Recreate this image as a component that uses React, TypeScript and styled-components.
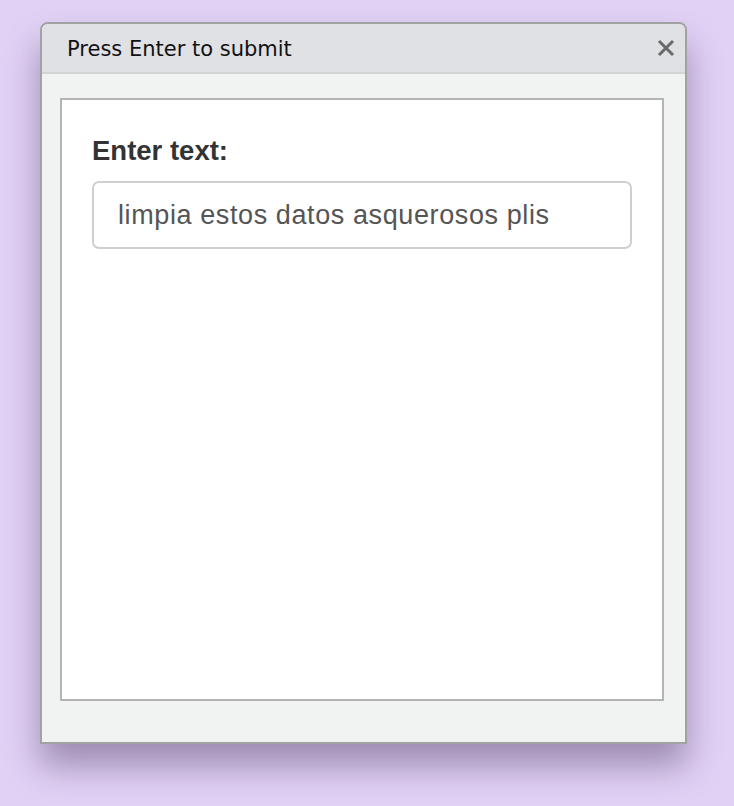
import React from "react";
import styled, { createGlobalStyle } from "styled-components";

const Global = createGlobalStyle`
  html, body { margin: 0; padding: 0; background: #e1d1f5; }
  body { width: 734px; height: 806px; overflow: hidden; }
`;

const Page = styled.div`
  padding: 22px 0 0 40px;
`;

const Window = styled.div`
  width: 643px;
  height: 718px;
  border: 2px solid #a2a2a2;
  border-radius: 8px 8px 0 0;
  background: #f1f3f2;
  box-shadow: 0 22px 34px rgba(40, 20, 60, 0.36);
  display: flex;
  flex-direction: column;
  overflow: hidden;
`;

const TitleBar = styled.div`
  height: 48px;
  flex: none;
  background: #e0e1e5;
  border-bottom: 2px solid #d3d4d6;
  display: flex;
  align-items: center;
  justify-content: space-between;
  padding: 0 8px 0 25px;
`;

const Title = styled.span`
  font-family: "DejaVu Sans", "Open Sans", sans-serif;
  font-size: 21px;
  color: #111;
  margin-top: 2px;
`;

const Close = styled.button`
  border: none;
  background: none;
  padding: 0;
  width: 22px;
  height: 22px;
  display: flex;
  align-items: center;
  justify-content: center;
  cursor: pointer;
`;

const Body = styled.div`
  flex: 1;
  padding: 24px 22px 41px 18px;
  display: flex;
`;

const Panel = styled.div`
  flex: 1;
  background: #fff;
  border: 2px solid #b4b4b4;
  padding: 36px 30px 0 30px;
  display: flex;
  flex-direction: column;
`;

const Label = styled.label`
  font-family: "Liberation Sans", Arial, sans-serif;
  font-weight: bold;
  font-size: 27.5px;
  line-height: 30px;
  color: #333;
  margin-bottom: 15px;
`;

const Input = styled.input`
  box-sizing: border-box;
  width: 540px;
  height: 68px;
  border: 2px solid #cfcfcf;
  border-radius: 7px;
  padding: 0 24px;
  font-family: "Liberation Sans", Arial, sans-serif;
  font-size: 27px;
  letter-spacing: 0.6px;
  color: #555;
  outline: none;
  background: #fff;
`;

export default function App() {
  return (
    <>
      <Global />
      <Page>
        <Window>
          <TitleBar>
            <Title>Press Enter to submit</Title>
            <Close aria-label="close">
              <svg width="18" height="18" viewBox="0 0 18 18">
                <path d="M2 2 L16 16 M16 2 L2 16" stroke="#6a6a6a" strokeWidth="3" strokeLinecap="butt" />
              </svg>
            </Close>
          </TitleBar>
          <Body>
            <Panel>
              <Label>Enter text:</Label>
              <Input defaultValue="limpia estos datos asquerosos plis" />
            </Panel>
          </Body>
        </Window>
      </Page>
    </>
  );
}
